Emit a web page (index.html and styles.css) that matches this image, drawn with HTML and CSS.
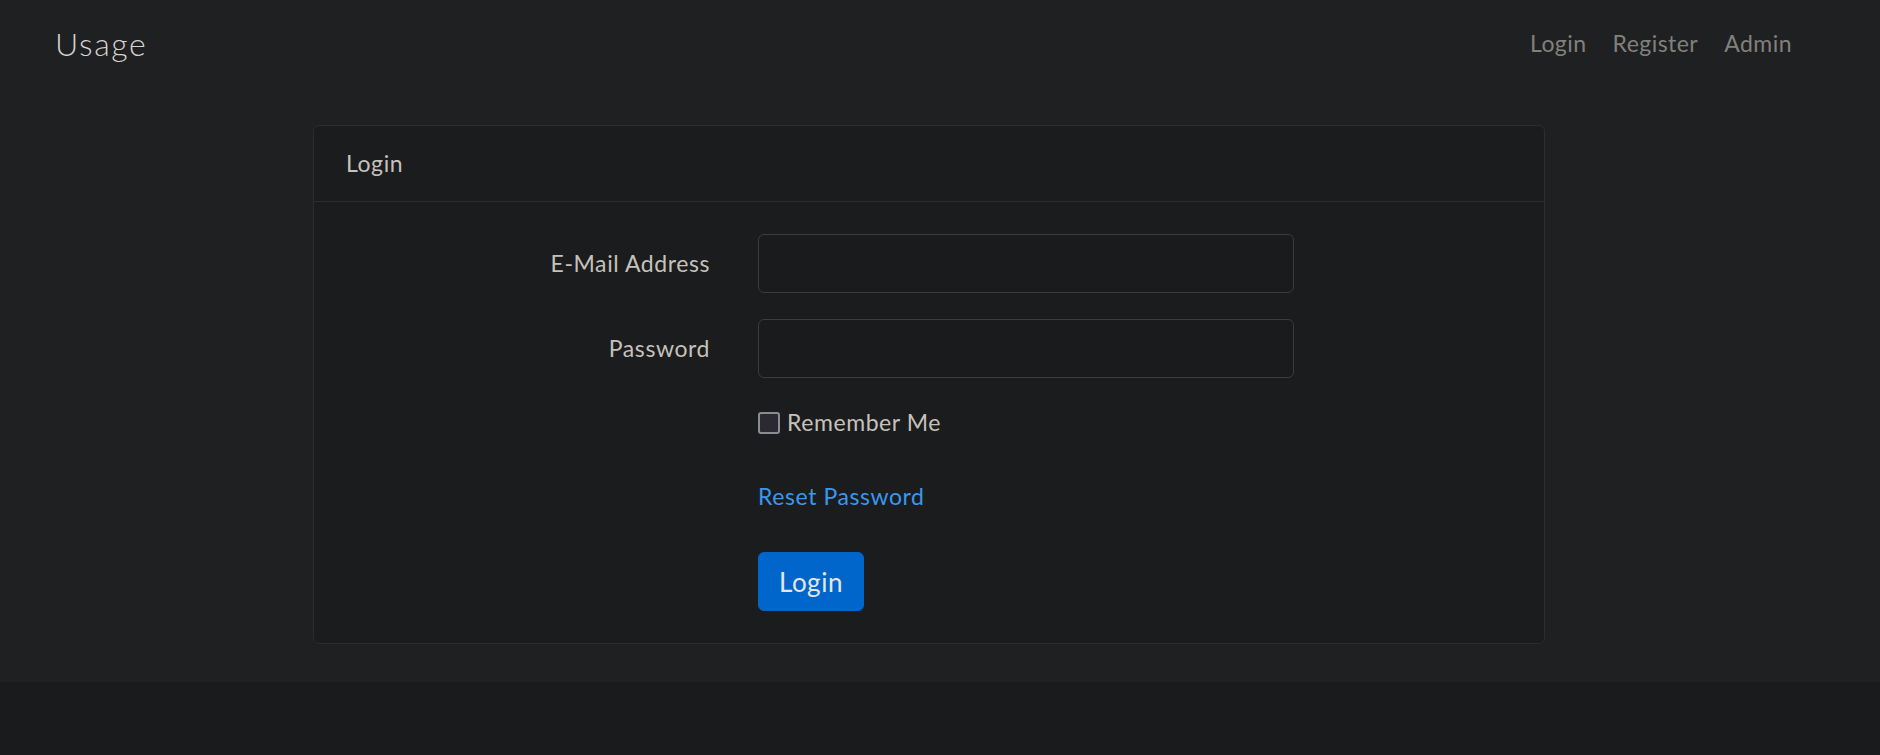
FILE: index.html
```html
<!DOCTYPE html>
<html lang="en">
<head>
<meta charset="utf-8">
<title>Usage</title>
<link rel="stylesheet" href="styles.css">
</head>
<body>
<div class="app">
  <nav class="navbar">
    <a class="brand" href="#">Usage</a>
    <ul class="nav-links">
      <li><a href="#">Login</a></li>
      <li><a href="#">Register</a></li>
      <li><a href="#">Admin</a></li>
    </ul>
  </nav>
  <main class="main">
    <div class="card">
      <div class="card-header">Login</div>
      <div class="card-body">
        <form class="login-form">
          <label class="form-label" for="email">E-Mail Address</label>
          <input class="form-control" id="email" type="email">
          <label class="form-label" for="password">Password</label>
          <input class="form-control" id="password" type="password">
          <label class="form-check field">
            <input class="check-input" type="checkbox">
            <span>Remember Me</span>
          </label>
          <a class="reset-link field" href="#">Reset Password</a>
          <button class="btn-primary field" type="button">Login</button>
        </form>
      </div>
    </div>
  </main>
</div>
</body>
</html>
```

FILE: styles.css
```css
* {
  box-sizing: border-box;
}

body {
  margin: 0;
  background: #1a1b1d;
  font-family: "Lato", "Open Sans", sans-serif;
  font-weight: 400;
  font-size: 23px;
  letter-spacing: 0.025em;
  color: #c6c1ba;
}

a {
  text-decoration: none;
}

.app {
  background: #1e2022;
}

.navbar {
  display: flex;
  justify-content: space-between;
  align-items: center;
  padding: 13px 75px 13px 55px;
}

.brand {
  font-size: 32px;
  font-weight: 300;
  line-height: 51px;
  padding: 5px 0;
  letter-spacing: 0.05em;
  color: #d6d2cc;
}

.nav-links {
  display: flex;
  list-style: none;
  margin: 0;
  padding: 0;
}

.nav-links a {
  display: block;
  padding: 0 13px;
  color: #82807b;
  line-height: 37px;
  letter-spacing: 0.02em;
}

.main {
  padding: 38px 0 38px 313px;
}

.card {
  width: 1232px;
  background: #1b1c1e;
  border: 1px solid #2b2d30;
  border-radius: 6px;
}

.card-header {
  padding: 19px 32px;
  line-height: 37px;
  border-bottom: 1px solid #2b2d30;
}

.card-body {
  padding: 32px;
}

.login-form {
  display: grid;
  grid-template-columns: 364px 536px;
  column-gap: 48px;
  row-gap: 26px;
}

.form-label {
  grid-column: 1;
  align-self: center;
  text-align: right;
  line-height: 37px;
}

.form-control {
  grid-column: 2;
  height: 59px;
  background: #1a1b1d;
  border: 1px solid #3a3c40;
  border-radius: 6px;
  color: #cbc6bf;
  font: inherit;
  padding: 0 19px;
}

.field {
  grid-column: 2;
}

.form-check {
  display: flex;
  align-items: center;
  gap: 7px;
  line-height: 37px;
  height: 37px;
}

.check-input {
  appearance: none;
  -webkit-appearance: none;
  margin: 0;
  width: 22px;
  height: 22px;
  border: 2px solid #8a8c92;
  border-radius: 3px;
  background: #2b2a33;
}

.reset-link {
  color: #3a97ee;
  line-height: 59px;
  justify-self: start;
}

.btn-primary {
  justify-self: start;
  height: 59px;
  padding: 0 20px;
  background: #0066cc;
  border: 1px solid #0066cc;
  border-radius: 6px;
  color: #e8e6e3;
  font-family: inherit;
  font-weight: 400;
  font-size: 26px;
  letter-spacing: 0.02em;
}
```
